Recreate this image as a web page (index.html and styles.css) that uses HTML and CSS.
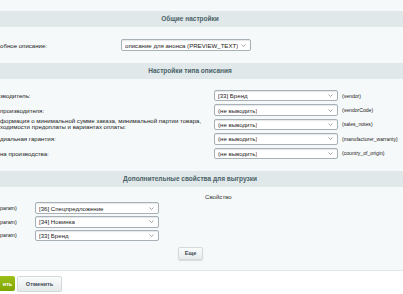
FILE: index.html
```html
<!DOCTYPE html>
<html>
<head>
<meta charset="utf-8">
<link rel="stylesheet" href="styles.css">
</head>
<body>
<div class="panel">
  <div class="band">Общие настройки</div>
  <div class="sec sec1">
    <div class="row">
      <div class="lab lab1">обное описание:</div>
      <div class="sel sel1"><span class="val">описание для анонса (PREVIEW_TEXT)</span><svg class="chev" width="5" height="3" viewBox="0 0 5 3"><path d="M0.5 0.5 L2.5 2.5 L4.5 0.5" fill="none" stroke="#8a8f93" stroke-width="0.8"/></svg></div>
    </div>
  </div>
  <div class="band">Настройки типа описания</div>
  <div class="sec sec2">
    <div class="row r2">
      <div class="lab lab2">зводитель:</div>
      <div class="sel sel2"><span class="val">[33] Бренд</span><svg class="chev" width="5" height="3" viewBox="0 0 5 3"><path d="M0.5 0.5 L2.5 2.5 L4.5 0.5" fill="none" stroke="#8a8f93" stroke-width="0.8"/></svg></div>
      <div class="note">(vendor)</div>
    </div>
    <div class="row r2">
      <div class="lab lab2">производителя:</div>
      <div class="sel sel2"><span class="val">(не выводить)</span><svg class="chev" width="5" height="3" viewBox="0 0 5 3"><path d="M0.5 0.5 L2.5 2.5 L4.5 0.5" fill="none" stroke="#8a8f93" stroke-width="0.8"/></svg></div>
      <div class="note">(vendorCode)</div>
    </div>
    <div class="row r2">
      <div class="lab lab2 two">формация о минимальной сумме заказа, минимальной партии товара,<br>ходимости предоплаты и вариантах оплаты:</div>
      <div class="sel sel2"><span class="val">(не выводить)</span><svg class="chev" width="5" height="3" viewBox="0 0 5 3"><path d="M0.5 0.5 L2.5 2.5 L4.5 0.5" fill="none" stroke="#8a8f93" stroke-width="0.8"/></svg></div>
      <div class="note">(sales_notes)</div>
    </div>
    <div class="row r2">
      <div class="lab lab2">диальная гарантия:</div>
      <div class="sel sel2"><span class="val">(не выводить)</span><svg class="chev" width="5" height="3" viewBox="0 0 5 3"><path d="M0.5 0.5 L2.5 2.5 L4.5 0.5" fill="none" stroke="#8a8f93" stroke-width="0.8"/></svg></div>
      <div class="note">(manufacturer_warranty)</div>
    </div>
    <div class="row r2">
      <div class="lab lab2">на производства:</div>
      <div class="sel sel2"><span class="val">(не выводить)</span><svg class="chev" width="5" height="3" viewBox="0 0 5 3"><path d="M0.5 0.5 L2.5 2.5 L4.5 0.5" fill="none" stroke="#8a8f93" stroke-width="0.8"/></svg></div>
      <div class="note">(country_of_origin)</div>
    </div>
  </div>
  <div class="band">Дополнительные свойства для выгрузки</div>
  <div class="sec sec3">
    <div class="prop-head">Свойство</div>
    <div class="row r3">
      <div class="lab lab3">param)</div>
      <div class="sel sel3"><span class="val">[36] Спецпредложение</span><svg class="chev" width="5" height="3" viewBox="0 0 5 3"><path d="M0.5 0.5 L2.5 2.5 L4.5 0.5" fill="none" stroke="#8a8f93" stroke-width="0.8"/></svg></div>
    </div>
    <div class="row r3">
      <div class="lab lab3">param)</div>
      <div class="sel sel3"><span class="val">[34] Новинка</span><svg class="chev" width="5" height="3" viewBox="0 0 5 3"><path d="M0.5 0.5 L2.5 2.5 L4.5 0.5" fill="none" stroke="#8a8f93" stroke-width="0.8"/></svg></div>
    </div>
    <div class="row r3">
      <div class="lab lab3">param)</div>
      <div class="sel sel3"><span class="val">[33] Бренд</span><svg class="chev" width="5" height="3" viewBox="0 0 5 3"><path d="M0.5 0.5 L2.5 2.5 L4.5 0.5" fill="none" stroke="#8a8f93" stroke-width="0.8"/></svg></div>
    </div>
    <div class="more-row"><button class="btn more">Еще</button></div>
  </div>
</div>
<div class="btns">
  <button class="btn save">ить</button>
  <button class="btn cancel">Отменить</button>
</div>
</body>
</html>
```

FILE: styles.css
```css
html, body {
  margin: 0;
  padding: 0;
  background: #ffffff;
  font-family: "Liberation Sans", Arial, sans-serif;
  font-size: 6.1px;
  color: #000;
  overflow: hidden;
}
.panel {
  background: #f5f9f9;
  padding-top: 11px;
  border-bottom: 1px solid #dce7ea;
}
.band {
  background: #e0e8ea;
  height: 16px;
  line-height: 16px;
  text-align: center;
  padding-right: 23px;
  font-weight: bold;
  font-size: 6.5px;
  color: #4b6267;
}
.row {
  display: flex;
  align-items: center;
}
.lab {
  color: #1a1a1a;
  white-space: nowrap;
  font-size: 6.1px;
}
.sel {
  box-sizing: border-box;
  background: #fff;
  border: 1px solid #a7b0b6;
  border-radius: 2px;
  box-shadow: inset 0 1px 1px rgba(180,188,191,0.35);
  display: flex;
  align-items: center;
  justify-content: space-between;
  padding: 0 4px 0 3px;
  font-size: 6.1px;
  color: #1a1a1a;
}
.chev { flex: none; }
.val { white-space: nowrap; overflow: hidden; }

.sec1 { padding: 12px 0; }
.lab1 { width: 121px; }
.sel1 { width: 130px; height: 12px; }

.sec2 { padding: 9.5px 0 10.5px; }
.r2 { height: 14.4px; }
.lab2 { width: 214px; }
.lab2.two { line-height: 6.6px; }
.sel2 { width: 124px; height: 11.5px; }
.note {
  margin-left: 4px;
  font-size: 5.1px;
  color: #222;
  white-space: nowrap;
}

.sec3 { padding-bottom: 10px; }
.prop-head {
  height: 14.3px;
  box-sizing: border-box;
  padding: 6px 0 0 205px;
  line-height: 8px;
  font-size: 6.1px;
  color: #333;
}
.r3 { height: 13.7px; }
.lab3 { width: 35px; font-size: 5.3px; }
.sel3 { width: 124px; height: 11.7px; }

.more-row {
  padding: 4.6px 0 0 178px;
}
.btn {
  box-sizing: border-box;
  font-family: "Liberation Sans", Arial, sans-serif;
  font-weight: bold;
  border-radius: 2px;
  padding: 0;
  margin: 0;
}
.more {
  width: 25px;
  height: 13px;
  font-size: 5.6px;
  color: #3f4b54;
  background: linear-gradient(#fbfcfc, #e6ebec);
  border: 1px solid #d4dadc;
  box-shadow: 0 1px 1px rgba(0,0,0,0.12);
}
.btns {
  display: flex;
  align-items: center;
  gap: 2px;
  padding-top: 5px;
}
.save {
  width: 15px;
  height: 15px;
  font-size: 5.6px;
  color: #fff;
  background: linear-gradient(#9ec11a, #7da400);
  border: none;
  border-radius: 0 2px 2px 0;
}
.cancel {
  width: 45px;
  height: 16px;
  font-size: 5.6px;
  color: #3f4b54;
  background: linear-gradient(#fbfcfc, #e4e9ea);
  border: 1px solid #d4dadc;
  box-shadow: 0 1px 1px rgba(0,0,0,0.12);
}
```
